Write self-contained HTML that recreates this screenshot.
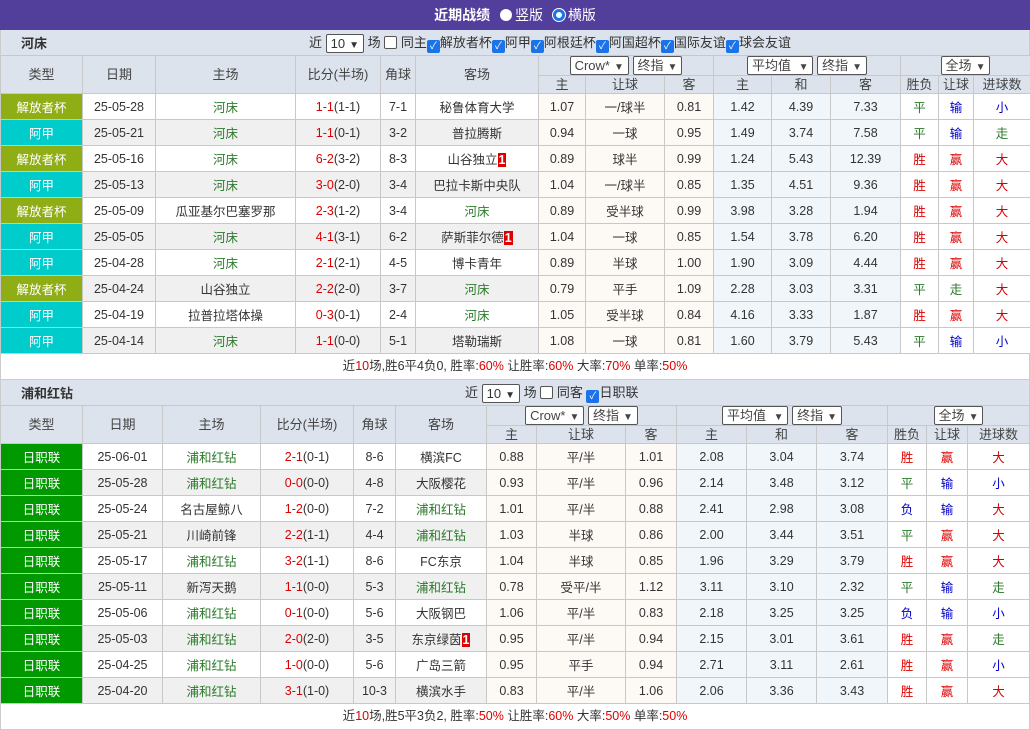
<!DOCTYPE html>
<html><head><meta charset="utf-8">
<style>
*{box-sizing:border-box;margin:0;padding:0}
body{width:1030px;height:729px;background:#fff;font-family:"Liberation Sans","Noto Sans CJK SC",sans-serif;font-size:12.5px;color:#333;overflow:hidden}
.top{height:30px;background:#523f9b;color:#fff;text-align:center;font-weight:bold;font-size:14px;line-height:30px}
.top .r{display:inline-block;width:12px;height:12px;border-radius:50%;background:#fff;vertical-align:-1px;margin:0 3px 0 6px}
.top .r.on{background:#fff;border:3px solid #1a73e8;box-shadow:0 0 0 1px #fff}
.top span{font-weight:normal}
.sh{height:25px;background:#dce3ec;position:relative;line-height:25px;border-left:1px solid #ccc;border-right:1px solid #ccc}
.sh b{position:absolute;left:20px;top:1px;font-size:13px}
.sh .f{position:absolute;top:0px;font-size:13px;color:#333}
.sel{display:inline-block;border:1px solid #555;background:#fff;height:19px;line-height:17px;padding:0 4px;font-size:13px;vertical-align:middle;border-radius:2px}
.sel i{font-style:normal;font-size:10px;margin-left:4px}
.cb{display:inline-block;width:13px;height:13px;border-radius:2px;background:#1a73e8;color:#fff;font-size:10px;line-height:13px;text-align:center;vertical-align:-2px}
.cb.off{background:#fff;border:1px solid #555}
table{border-collapse:collapse;table-layout:fixed;width:1029px}
td{border:1px solid #c8c8c8;text-align:center;height:26px;white-space:nowrap;overflow:hidden}
tr.h td{background:#dce3ec;height:18px;font-size:13px;color:#444;line-height:16px;padding:0}
tr.h td.t{height:36px}
tr.e td.g{background:#f0f0f0}
td.p{background:#fdf9f5}
td.b{background:#f0f6fa}
td.k1{background:#8fad15;color:#fff}
td.k2{background:#00cccc;color:#fff}
td.k3{background:#009900;color:#fff}
.gr{color:#2a7a2a}
.rd{color:#d00}
.bl{color:#00c}
.n{background:#d00;color:#fff;font-weight:bold;padding:0 1px}
.sum{height:26px;text-align:center;line-height:25px;border:1px solid #ccc;border-top:none;font-size:12.5px}
.sum em{font-style:normal;color:#d00}
</style></head><body>
<div class="top">近期战绩 <i class="r"></i><span>竖版</span> <i class="r on"></i><span>横版</span></div>

<div class="sh"><b>河床</b><div class="f" style="left:308px">近 <span class="sel">10<i>▼</i></span> 场 <span class="cb off"></span> 同主<span class="cb">✓</span>解放者杯<span class="cb">✓</span>阿甲<span class="cb">✓</span>阿根廷杯<span class="cb">✓</span>阿国超杯<span class="cb">✓</span>国际友谊<span class="cb">✓</span>球会友谊</div></div>
<table>
<colgroup><col style="width:82px"><col style="width:73px"><col style="width:140px"><col style="width:85px"><col style="width:35px"><col style="width:123px"><col style="width:47px"><col style="width:79px"><col style="width:49px"><col style="width:58px"><col style="width:59px"><col style="width:70px"><col style="width:38px"><col style="width:35px"><col style="width:57px"></colgroup>
<tr class="h"><td class="t" rowspan="2">类型</td><td class="t" rowspan="2">日期</td><td class="t" rowspan="2">主场</td><td class="t" rowspan="2">比分(半场)</td><td class="t" rowspan="2">角球</td><td class="t" rowspan="2">客场</td><td colspan="3"><span class="sel">Crow*<i>▼</i></span> <span class="sel">终指<i>▼</i></span></td><td colspan="3"><span class="sel">平均值 <i>▼</i></span> <span class="sel">终指<i>▼</i></span></td><td colspan="3"><span class="sel">全场<i>▼</i></span></td></tr>
<tr class="h"><td>主</td><td>让球</td><td>客</td><td>主</td><td>和</td><td>客</td><td>胜负</td><td>让球</td><td>进球数</td></tr>
<tr><td class="k1">解放者杯</td><td class="g">25-05-28</td><td class="g gr">河床</td><td class="g"><span class="rd">1-1</span>(1-1)</td><td class="g">7-1</td><td class="g">秘鲁体育大学</td><td class="p">1.07</td><td class="p">一/球半</td><td class="p">0.81</td><td class="b">1.42</td><td class="b">4.39</td><td class="b">7.33</td><td class="gr">平</td><td class="bl">输</td><td class="bl">小</td></tr>
<tr class="e"><td class="k2">阿甲</td><td class="g">25-05-21</td><td class="g gr">河床</td><td class="g"><span class="rd">1-1</span>(0-1)</td><td class="g">3-2</td><td class="g">普拉腾斯</td><td class="p">0.94</td><td class="p">一球</td><td class="p">0.95</td><td class="b">1.49</td><td class="b">3.74</td><td class="b">7.58</td><td class="gr">平</td><td class="bl">输</td><td class="gr">走</td></tr>
<tr><td class="k1">解放者杯</td><td class="g">25-05-16</td><td class="g gr">河床</td><td class="g"><span class="rd">6-2</span>(3-2)</td><td class="g">8-3</td><td class="g">山谷独立<span class="n">1</span></td><td class="p">0.89</td><td class="p">球半</td><td class="p">0.99</td><td class="b">1.24</td><td class="b">5.43</td><td class="b">12.39</td><td class="rd">胜</td><td class="rd">赢</td><td class="rd">大</td></tr>
<tr class="e"><td class="k2">阿甲</td><td class="g">25-05-13</td><td class="g gr">河床</td><td class="g"><span class="rd">3-0</span>(2-0)</td><td class="g">3-4</td><td class="g">巴拉卡斯中央队</td><td class="p">1.04</td><td class="p">一/球半</td><td class="p">0.85</td><td class="b">1.35</td><td class="b">4.51</td><td class="b">9.36</td><td class="rd">胜</td><td class="rd">赢</td><td class="rd">大</td></tr>
<tr><td class="k1">解放者杯</td><td class="g">25-05-09</td><td class="g">瓜亚基尔巴塞罗那</td><td class="g"><span class="rd">2-3</span>(1-2)</td><td class="g">3-4</td><td class="g gr">河床</td><td class="p">0.89</td><td class="p">受半球</td><td class="p">0.99</td><td class="b">3.98</td><td class="b">3.28</td><td class="b">1.94</td><td class="rd">胜</td><td class="rd">赢</td><td class="rd">大</td></tr>
<tr class="e"><td class="k2">阿甲</td><td class="g">25-05-05</td><td class="g gr">河床</td><td class="g"><span class="rd">4-1</span>(3-1)</td><td class="g">6-2</td><td class="g">萨斯菲尔德<span class="n">1</span></td><td class="p">1.04</td><td class="p">一球</td><td class="p">0.85</td><td class="b">1.54</td><td class="b">3.78</td><td class="b">6.20</td><td class="rd">胜</td><td class="rd">赢</td><td class="rd">大</td></tr>
<tr><td class="k2">阿甲</td><td class="g">25-04-28</td><td class="g gr">河床</td><td class="g"><span class="rd">2-1</span>(2-1)</td><td class="g">4-5</td><td class="g">博卡青年</td><td class="p">0.89</td><td class="p">半球</td><td class="p">1.00</td><td class="b">1.90</td><td class="b">3.09</td><td class="b">4.44</td><td class="rd">胜</td><td class="rd">赢</td><td class="rd">大</td></tr>
<tr class="e"><td class="k1">解放者杯</td><td class="g">25-04-24</td><td class="g">山谷独立</td><td class="g"><span class="rd">2-2</span>(2-0)</td><td class="g">3-7</td><td class="g gr">河床</td><td class="p">0.79</td><td class="p">平手</td><td class="p">1.09</td><td class="b">2.28</td><td class="b">3.03</td><td class="b">3.31</td><td class="gr">平</td><td class="gr">走</td><td class="rd">大</td></tr>
<tr><td class="k2">阿甲</td><td class="g">25-04-19</td><td class="g">拉普拉塔体操</td><td class="g"><span class="rd">0-3</span>(0-1)</td><td class="g">2-4</td><td class="g gr">河床</td><td class="p">1.05</td><td class="p">受半球</td><td class="p">0.84</td><td class="b">4.16</td><td class="b">3.33</td><td class="b">1.87</td><td class="rd">胜</td><td class="rd">赢</td><td class="rd">大</td></tr>
<tr class="e"><td class="k2">阿甲</td><td class="g">25-04-14</td><td class="g gr">河床</td><td class="g"><span class="rd">1-1</span>(0-0)</td><td class="g">5-1</td><td class="g">塔勒瑞斯</td><td class="p">1.08</td><td class="p">一球</td><td class="p">0.81</td><td class="b">1.60</td><td class="b">3.79</td><td class="b">5.43</td><td class="gr">平</td><td class="bl">输</td><td class="bl">小</td></tr>
</table>
<div class="sum">近<em>10</em>场,胜6平4负0, 胜率:<em>60%</em> 让胜率:<em>60%</em> 大率:<em>70%</em> 单率:<em>50%</em></div>

<div class="sh"><b>浦和红钻</b><div class="f" style="left:464px">近 <span class="sel">10<i>▼</i></span> 场 <span class="cb off"></span> 同客 <span class="cb">✓</span>日职联</div></div>
<table>
<colgroup><col style="width:82px"><col style="width:80px"><col style="width:98px"><col style="width:93px"><col style="width:42px"><col style="width:91px"><col style="width:50px"><col style="width:89px"><col style="width:51px"><col style="width:70px"><col style="width:70px"><col style="width:71px"><col style="width:39px"><col style="width:41px"><col style="width:62px"></colgroup>
<tr class="h"><td class="t" rowspan="2">类型</td><td class="t" rowspan="2">日期</td><td class="t" rowspan="2">主场</td><td class="t" rowspan="2">比分(半场)</td><td class="t" rowspan="2">角球</td><td class="t" rowspan="2">客场</td><td colspan="3"><span class="sel">Crow*<i>▼</i></span> <span class="sel">终指<i>▼</i></span></td><td colspan="3"><span class="sel">平均值 <i>▼</i></span> <span class="sel">终指<i>▼</i></span></td><td colspan="3"><span class="sel">全场<i>▼</i></span></td></tr>
<tr class="h"><td>主</td><td>让球</td><td>客</td><td>主</td><td>和</td><td>客</td><td>胜负</td><td>让球</td><td>进球数</td></tr>
<tr><td class="k3">日职联</td><td class="g">25-06-01</td><td class="g gr">浦和红钻</td><td class="g"><span class="rd">2-1</span>(0-1)</td><td class="g">8-6</td><td class="g">横滨FC</td><td class="p">0.88</td><td class="p">平/半</td><td class="p">1.01</td><td class="b">2.08</td><td class="b">3.04</td><td class="b">3.74</td><td class="rd">胜</td><td class="rd">赢</td><td class="rd">大</td></tr>
<tr class="e"><td class="k3">日职联</td><td class="g">25-05-28</td><td class="g gr">浦和红钻</td><td class="g"><span class="rd">0-0</span>(0-0)</td><td class="g">4-8</td><td class="g">大阪樱花</td><td class="p">0.93</td><td class="p">平/半</td><td class="p">0.96</td><td class="b">2.14</td><td class="b">3.48</td><td class="b">3.12</td><td class="gr">平</td><td class="bl">输</td><td class="bl">小</td></tr>
<tr><td class="k3">日职联</td><td class="g">25-05-24</td><td class="g">名古屋鲸八</td><td class="g"><span class="rd">1-2</span>(0-0)</td><td class="g">7-2</td><td class="g gr">浦和红钻</td><td class="p">1.01</td><td class="p">平/半</td><td class="p">0.88</td><td class="b">2.41</td><td class="b">2.98</td><td class="b">3.08</td><td class="bl">负</td><td class="bl">输</td><td class="rd">大</td></tr>
<tr class="e"><td class="k3">日职联</td><td class="g">25-05-21</td><td class="g">川崎前锋</td><td class="g"><span class="rd">2-2</span>(1-1)</td><td class="g">4-4</td><td class="g gr">浦和红钻</td><td class="p">1.03</td><td class="p">半球</td><td class="p">0.86</td><td class="b">2.00</td><td class="b">3.44</td><td class="b">3.51</td><td class="gr">平</td><td class="rd">赢</td><td class="rd">大</td></tr>
<tr><td class="k3">日职联</td><td class="g">25-05-17</td><td class="g gr">浦和红钻</td><td class="g"><span class="rd">3-2</span>(1-1)</td><td class="g">8-6</td><td class="g">FC东京</td><td class="p">1.04</td><td class="p">半球</td><td class="p">0.85</td><td class="b">1.96</td><td class="b">3.29</td><td class="b">3.79</td><td class="rd">胜</td><td class="rd">赢</td><td class="rd">大</td></tr>
<tr class="e"><td class="k3">日职联</td><td class="g">25-05-11</td><td class="g">新泻天鹅</td><td class="g"><span class="rd">1-1</span>(0-0)</td><td class="g">5-3</td><td class="g gr">浦和红钻</td><td class="p">0.78</td><td class="p">受平/半</td><td class="p">1.12</td><td class="b">3.11</td><td class="b">3.10</td><td class="b">2.32</td><td class="gr">平</td><td class="bl">输</td><td class="gr">走</td></tr>
<tr><td class="k3">日职联</td><td class="g">25-05-06</td><td class="g gr">浦和红钻</td><td class="g"><span class="rd">0-1</span>(0-0)</td><td class="g">5-6</td><td class="g">大阪钢巴</td><td class="p">1.06</td><td class="p">平/半</td><td class="p">0.83</td><td class="b">2.18</td><td class="b">3.25</td><td class="b">3.25</td><td class="bl">负</td><td class="bl">输</td><td class="bl">小</td></tr>
<tr class="e"><td class="k3">日职联</td><td class="g">25-05-03</td><td class="g gr">浦和红钻</td><td class="g"><span class="rd">2-0</span>(2-0)</td><td class="g">3-5</td><td class="g">东京绿茵<span class="n">1</span></td><td class="p">0.95</td><td class="p">平/半</td><td class="p">0.94</td><td class="b">2.15</td><td class="b">3.01</td><td class="b">3.61</td><td class="rd">胜</td><td class="rd">赢</td><td class="gr">走</td></tr>
<tr><td class="k3">日职联</td><td class="g">25-04-25</td><td class="g gr">浦和红钻</td><td class="g"><span class="rd">1-0</span>(0-0)</td><td class="g">5-6</td><td class="g">广岛三箭</td><td class="p">0.95</td><td class="p">平手</td><td class="p">0.94</td><td class="b">2.71</td><td class="b">3.11</td><td class="b">2.61</td><td class="rd">胜</td><td class="rd">赢</td><td class="bl">小</td></tr>
<tr class="e"><td class="k3">日职联</td><td class="g">25-04-20</td><td class="g gr">浦和红钻</td><td class="g"><span class="rd">3-1</span>(1-0)</td><td class="g">10-3</td><td class="g">横滨水手</td><td class="p">0.83</td><td class="p">平/半</td><td class="p">1.06</td><td class="b">2.06</td><td class="b">3.36</td><td class="b">3.43</td><td class="rd">胜</td><td class="rd">赢</td><td class="rd">大</td></tr>
</table>
<div class="sum">近<em>10</em>场,胜5平3负2, 胜率:<em>50%</em> 让胜率:<em>60%</em> 大率:<em>50%</em> 单率:<em>50%</em></div>
</body></html>
